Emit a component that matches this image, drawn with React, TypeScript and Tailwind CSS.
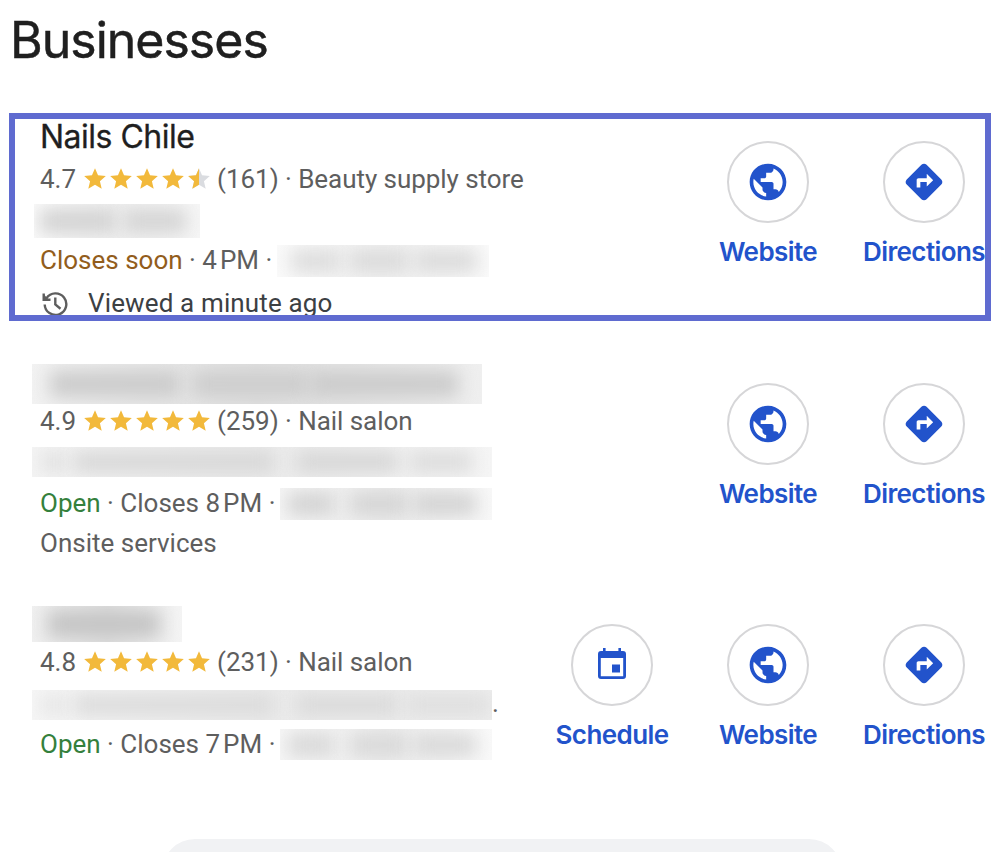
import React from "react";
import { MdPublic, MdDirections, MdStar } from "react-icons/md";

type Action = "Schedule" | "Website" | "Directions";

function CalendarIcon() {
  return (
    <svg className="-mt-[4px]" width="28" height="31" viewBox="0 0 28 31" fill="currentColor">
      <path fillRule="evenodd" d="M5 0h2.6v3h12.800V0H23v3h2a3 3 0 0 1 3 3v22a3 3 0 0 1-3 3H3a3 3 0 0 1-3-3V6a3 3 0 0 1 3-3h2zM2.800 10V28.200h22.400V10z" />
      <rect x="14" y="16.500" width="8" height="8" />
    </svg>
  );
}

function HistoryIcon() {
  return (
    <svg className="ml-[2px] mr-[20px] shrink-0" width="26" height="28" viewBox="0 0 26 28" fill="none" stroke="currentColor" strokeWidth="2.4">
      <path d="M2.700 14.500A10.800 10.800 0 1 0 4.500 8.200" />
      <path d="M1.700 3.500v6.300h6.800" />
      <path d="M1.800 4.500v4.700h4.700z" fill="currentColor" stroke="none" />
      <path d="M13.300 7.500v7l5.200 4.200" />
    </svg>
  );
}

function ActionButton({ kind }: { kind: Action }) {
  return (
    <a className="flex w-[124px] flex-col items-center text-[#2253cb]">
      <span className="flex h-[82px] w-[82px] items-center justify-center rounded-full border-2 border-[#d6d6d8]">
        {kind === "Schedule" && <CalendarIcon />}
        {kind === "Website" && <MdPublic size={44} />}
        {kind === "Directions" && <MdDirections size={44} />}
      </span>
      <span className="mt-[11px] whitespace-nowrap font-['Inter'] text-[26px] font-semibold leading-[36px] tracking-[-0.6px]">{kind}</span>
    </a>
  );
}

function Actions({ kinds }: { kinds: Action[] }) {
  return (
    <div className="flex gap-[32px] pt-[28px]">
      {kinds.map((k) => <ActionButton key={k} kind={k} />)}
    </div>
  );
}

function Stars({ half }: { half?: boolean }) {
  return (
    <span className="-mt-[2px] ml-[6px] mr-[5px] flex text-[#f2b93b]">
      {[0, 1, 2, 3].map((i) => <MdStar key={i} size={26} />)}
      {half ? (
        <span className="relative text-[#dadce0]">
          <MdStar size={26} />
          <span className="absolute left-0 top-0 w-[13px] overflow-hidden text-[#f2b93b]"><MdStar size={26} /></span>
        </span>
      ) : <MdStar size={26} />}
    </span>
  );
}

function Redacted({ box, bars }: { box: string; bars: string[] }) {
  return (
    <span className={`flex shrink-0 items-center overflow-hidden ${box}`}>
      {bars.map((b, i) => <span key={i} className={`shrink-0 blur-[9px] ${b}`} />)}
    </span>
  );
}

const line = "flex h-[41px] items-center whitespace-pre";

export default function App() {
  return (
    <main className="h-[852px] w-[1000px] overflow-hidden bg-white font-['Roboto'] text-[26px] leading-[41px] text-[#5e5e5e]">
      <h1 className="h-[113px] pl-[10px] pt-[9px] font-['Inter'] text-[50px] leading-[62px] tracking-[-1px] text-[#1f1f1f] [-webkit-text-stroke:0.5px_#1f1f1f]">Businesses</h1>

      <section className="relative flex h-[208px] justify-between overflow-hidden pl-[40px] pr-[14px]">
        <div className="pt-[4px]">
          <h2 className="h-[42px] font-['Inter'] text-[32px] leading-[40px] tracking-[-0.5px] text-[#1f1f1f] [-webkit-text-stroke:0.3px_#1f1f1f]">Nails Chile</h2>
          <div className={line}>4.7<Stars half /><span className="tracking-[-0.05px]">(161) · Beauty supply store</span></div>
          <div className={line}>
            <Redacted box="-ml-[6px] h-[34px] w-[166px] bg-gradient-to-r from-[#fafafa] via-[#f0f0f0] to-[#f6f6f6]" bars={["ml-[6px] h-[24px] w-[76px] bg-[#d2d2d2]", "ml-[8px] h-[24px] w-[62px] bg-[#d4d4d4]"]} />
          </div>
          <div className={`${line} -mt-px`}>
            <span className="text-[#925d1c]">Closes soon</span> · 4<span className="w-[3px]" />PM ·
            <Redacted box="ml-[5px] h-[32px] w-[212px] bg-gradient-to-r from-[#fafafa] via-[#f1f1f1] to-[#fafafa]" bars={["ml-[14px] h-[22px] w-[50px] bg-[#dcdcdc]", "ml-[8px] h-[22px] w-[60px] bg-[#dadada]", "ml-[6px] h-[22px] w-[62px] bg-[#dadada]"]} />
          </div>
          <div className={`${line} mt-[2px] text-[#3c4043]`}>
            <span className="text-[#5e5e5e]"><HistoryIcon /></span><span className="tracking-[0.14px]">Viewed a minute ago</span>
          </div>
        </div>
        <Actions kinds={["Website", "Directions"]} />
        <div className="absolute inset-y-0 left-[9px] right-[9px] border-[6px] border-[#5f6bd0]" />
      </section>

      <section className="mt-[34px] flex h-[241px] justify-between pl-[40px] pr-[14px]">
        <div>
          <div className="flex h-[46px] items-start pt-[9px]">
            <Redacted box="-ml-[8px] h-[40px] w-[450px] bg-gradient-to-r from-[#f2f2f2] via-[#e0e0e0] to-[#efefef]" bars={["ml-[18px] h-[26px] w-[130px] bg-[#cbcbcb]", "ml-[12px] h-[26px] w-[118px] bg-[#cdcdcd]", "h-[26px] w-[148px] bg-[#cbcbcb]"]} />
          </div>
          <div className={line}>4.9<Stars /><span className="tracking-[-0.05px]">(259) · Nail salon</span></div>
          <div className={line}>
            <Redacted box="-ml-[8px] -mt-[2px] h-[30px] w-[460px] bg-gradient-to-r from-[#f4f4f4] via-[#ebebeb] to-[#f5f5f5]" bars={["ml-[10px] h-[20px] w-[24px] bg-[#e0e0e0]", "ml-[8px] h-[20px] w-[200px] bg-[#d6d6d6]", "ml-[22px] h-[20px] w-[102px] bg-[#d5d5d5]", "ml-[12px] h-[20px] w-[62px] bg-[#dbdbdb]"]} />
          </div>
          <div className={line}>
            <span className="text-[#34803c]">Open</span> · Closes 8<span className="w-[3px]" />PM ·
            <Redacted box="ml-[5px] h-[32px] w-[212px] bg-gradient-to-r from-[#f5f5f5] via-[#ececec] to-[#f8f8f8]" bars={["ml-[8px] h-[22px] w-[46px] bg-[#d2d2d2]", "ml-[16px] h-[22px] w-[58px] bg-[#d4d4d4]", "ml-[6px] h-[22px] w-[62px] bg-[#d2d2d2]"]} />
          </div>
          <div className={`${line} -mt-px`}>Onsite services</div>
        </div>
        <Actions kinds={["Website", "Directions"]} />
      </section>

      <section className="flex h-[243px] justify-between pl-[40px] pr-[14px]">
        <div>
          <div className="flex h-[46px] items-start pt-[10px]">
            <Redacted box="-ml-[8px] h-[36px] w-[150px] bg-gradient-to-r from-[#f0f0f0] via-[#e0e0e0] to-[#f4f4f4]" bars={["ml-[16px] h-[26px] w-[112px] bg-[#c4c4c4]"]} />
          </div>
          <div className={line}>4.8<Stars /><span className="tracking-[-0.05px]">(231) · Nail salon</span></div>
          <div className={line}>
            <Redacted box="-ml-[8px] mt-[3px] h-[30px] w-[460px] bg-gradient-to-r from-[#f6f6f6] via-[#ebebeb] to-[#ededed]" bars={["ml-[10px] h-[20px] w-[24px] bg-[#e5e5e5]", "ml-[8px] h-[20px] w-[200px] bg-[#dadada]", "ml-[22px] h-[20px] w-[102px] bg-[#d9d9d9]", "ml-[8px] h-[20px] w-[84px] bg-[#dedede]"]} />.
          </div>
          <div className={line}>
            <span className="text-[#34803c]">Open</span> · Closes 7<span className="w-[3px]" />PM ·
            <Redacted box="ml-[5px] h-[31px] w-[212px] bg-gradient-to-r from-[#f6f6f6] via-[#ededed] to-[#f9f9f9]" bars={["ml-[8px] h-[22px] w-[46px] bg-[#d8d8d8]", "ml-[16px] h-[22px] w-[58px] bg-[#d8d8d8]", "ml-[6px] h-[22px] w-[62px] bg-[#d8d8d8]"]} />
          </div>
        </div>
        <Actions kinds={["Schedule", "Website", "Directions"]} />
      </section>

      <div className="ml-[162px] h-[66px] w-[680px] rounded-full bg-[#f1f2f4]" />
    </main>
  );
}
